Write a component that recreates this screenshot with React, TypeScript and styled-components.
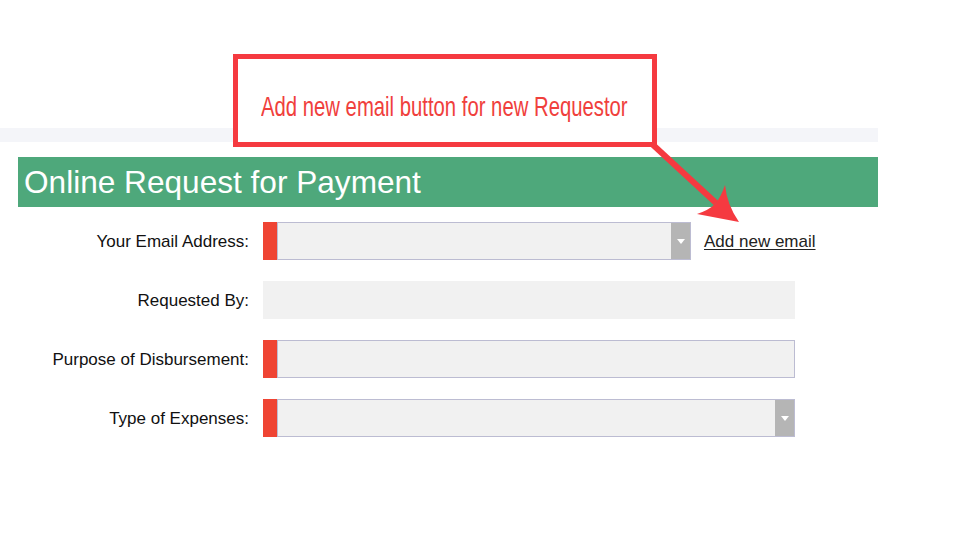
import React from "react";
import styled, { createGlobalStyle } from "styled-components";

const Global = createGlobalStyle`
  html, body { margin: 0; padding: 0; background: #ffffff; }
  body { font-family: "Liberation Sans", Arial, sans-serif; }
`;

const Page = styled.div`
  position: relative;
  width: 953px;
  height: 542px;
  padding-top: 128px;
  box-sizing: border-box;
  overflow: hidden;
`;

const Strip = styled.div`
  width: 878px;
  height: 14px;
  background: #f4f5f9;
`;

const Header = styled.div`
  margin: 15px 0 0 18px;
  width: 860px;
  height: 50px;
  background: #4ea87b;
  color: #ffffff;
  font-size: 31.6px;
  line-height: 50px;
  padding-left: 6px;
  box-sizing: border-box;
  white-space: nowrap;
`;

const Form = styled.div`
  margin-top: 15px;
  display: grid;
  grid-template-columns: 249px auto;
  column-gap: 14px;
  row-gap: 21px;
  align-items: center;
`;

const Label = styled.div`
  text-align: right;
  font-size: 17px;
  color: #111111;
  white-space: nowrap;
  padding-top: 2px;
`;

const FieldCell = styled.div`
  display: flex;
  align-items: center;
  height: 38px;
`;

const Field = styled.div<{ $width: number; $required?: boolean }>`
  display: flex;
  width: ${(p) => p.$width}px;
  height: 38px;
  box-sizing: border-box;
  background: #f1f1f1;
  ${(p) => (p.$required ? "border-left: 14px solid #ef4433;" : "")}
`;

const Input = styled.div<{ $bordered?: boolean }>`
  flex: 1;
  display: flex;
  justify-content: flex-end;
  box-sizing: border-box;
  ${(p) => (p.$bordered ? "border: 1px solid #bcbcd2;" : "")}
`;

const DropButton = styled.div`
  width: 19px;
  height: 100%;
  background: #b5b5b5;
  display: flex;
  align-items: center;
  justify-content: center;
`;

const Caret = styled.span`
  width: 0;
  height: 0;
  border-left: 4px solid transparent;
  border-right: 4px solid transparent;
  border-top: 5px solid #ffffff;
`;

const AddLink = styled.a`
  margin-left: 13px;
  padding-top: 2px;
  font-size: 17px;
  color: #222222;
  text-decoration: underline;
  text-underline-offset: 2px;
  cursor: pointer;
  white-space: nowrap;
`;

const Callout = styled.div`
  position: absolute;
  left: 233px;
  top: 54px;
  width: 424px;
  height: 93px;
  box-sizing: border-box;
  border: 5px solid #f53a40;
  background: #ffffff;
  padding: 33px 0 0 23px;
`;

const CalloutText = styled.div`
  display: inline-block;
  font-size: 28.5px;
  line-height: 28px;
  color: #f0403c;
  white-space: nowrap;
  transform: scaleX(0.712);
  transform-origin: left top;
`;

const ArrowLayer = styled.svg`
  position: absolute;
  left: 0;
  top: 0;
  pointer-events: none;
`;

export default function App() {
  return (
    <>
      <Global />
      <Page>
        <Strip />
        <Header>Online Request for Payment</Header>
        <Form>
          <Label>Your Email Address:</Label>
          <FieldCell>
            <Field $width={428} $required>
              <Input $bordered>
                <DropButton>
                  <Caret />
                </DropButton>
              </Input>
            </Field>
            <AddLink>Add new email</AddLink>
          </FieldCell>

          <Label>Requested By:</Label>
          <FieldCell>
            <Field $width={532}>
              <Input />
            </Field>
          </FieldCell>

          <Label>Purpose of Disbursement:</Label>
          <FieldCell>
            <Field $width={532} $required>
              <Input $bordered />
            </Field>
          </FieldCell>

          <Label>Type of Expenses:</Label>
          <FieldCell>
            <Field $width={532} $required>
              <Input $bordered>
                <DropButton>
                  <Caret />
                </DropButton>
              </Input>
            </Field>
          </FieldCell>
        </Form>

        <Callout>
          <CalloutText>Add new email button for new Requestor</CalloutText>
        </Callout>
        <ArrowLayer width="953" height="542" viewBox="0 0 953 542">
          <line x1="651" y1="143" x2="716" y2="203" stroke="#f53a40" strokeWidth="6" />
          <path
            d="M739 222 L697 214 Q709 210 715 204 Q721 197 725 185 Q727 205 739 222 Z"
            fill="#f53a40"
          />
        </ArrowLayer>
      </Page>
    </>
  );
}
